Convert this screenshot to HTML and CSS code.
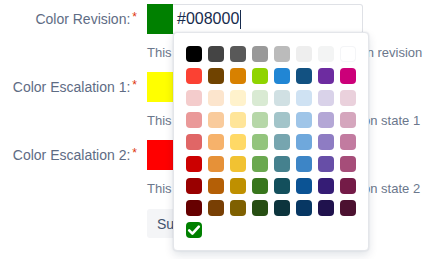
FILE: index.html
```html
<!DOCTYPE html>
<html>
<head>
<meta charset="utf-8">
<link rel="stylesheet" href="styles.css">
</head>
<body>
<form class="form">
  <div class="label">Color Revision:<span class="req">*</span></div>
  <div class="group">
    <div class="field">
      <div class="swatch-big green"></div>
      <div class="text-input">#008000<span class="caret"></span></div>
      <div class="picker">
        <span class="sw" style="background:#000000"></span>
        <span class="sw" style="background:#444444"></span>
        <span class="sw" style="background:#595959"></span>
        <span class="sw" style="background:#999999"></span>
        <span class="sw" style="background:#bbbbbb"></span>
        <span class="sw" style="background:#eeeeee"></span>
        <span class="sw" style="background:#f3f4f4"></span>
        <span class="sw light" style="background:#ffffff"></span>

        <span class="sw" style="background:#fb4133"></span>
        <span class="sw" style="background:#704300"></span>
        <span class="sw" style="background:#d88100"></span>
        <span class="sw" style="background:#8fd400"></span>
        <span class="sw" style="background:#2186d4"></span>
        <span class="sw" style="background:#125181"></span>
        <span class="sw" style="background:#6d2ca0"></span>
        <span class="sw" style="background:#cc0079"></span>

        <span class="sw" style="background:#f4cccc"></span>
        <span class="sw" style="background:#fce5cd"></span>
        <span class="sw" style="background:#fff2cc"></span>
        <span class="sw" style="background:#d9ead3"></span>
        <span class="sw" style="background:#d0e0e3"></span>
        <span class="sw" style="background:#cfe2f3"></span>
        <span class="sw" style="background:#d9d2e9"></span>
        <span class="sw" style="background:#ead1dc"></span>

        <span class="sw" style="background:#ea9999"></span>
        <span class="sw" style="background:#f9cb9c"></span>
        <span class="sw" style="background:#ffe599"></span>
        <span class="sw" style="background:#b6d7a8"></span>
        <span class="sw" style="background:#a2c4c9"></span>
        <span class="sw" style="background:#9fc5e8"></span>
        <span class="sw" style="background:#b4a7d6"></span>
        <span class="sw" style="background:#d5a6bd"></span>

        <span class="sw" style="background:#e06666"></span>
        <span class="sw" style="background:#f6b26b"></span>
        <span class="sw" style="background:#ffd966"></span>
        <span class="sw" style="background:#93c47d"></span>
        <span class="sw" style="background:#76a5af"></span>
        <span class="sw" style="background:#6fa8dc"></span>
        <span class="sw" style="background:#8e7cc3"></span>
        <span class="sw" style="background:#c27ba0"></span>

        <span class="sw" style="background:#cc0000"></span>
        <span class="sw" style="background:#e69138"></span>
        <span class="sw" style="background:#f1c232"></span>
        <span class="sw" style="background:#6aa84f"></span>
        <span class="sw" style="background:#45818e"></span>
        <span class="sw" style="background:#3d85c6"></span>
        <span class="sw" style="background:#674ea7"></span>
        <span class="sw" style="background:#a64d79"></span>

        <span class="sw" style="background:#990000"></span>
        <span class="sw" style="background:#b45f06"></span>
        <span class="sw" style="background:#bf9000"></span>
        <span class="sw" style="background:#38761d"></span>
        <span class="sw" style="background:#134f5c"></span>
        <span class="sw" style="background:#0b5394"></span>
        <span class="sw" style="background:#351c75"></span>
        <span class="sw" style="background:#741b47"></span>

        <span class="sw" style="background:#660000"></span>
        <span class="sw" style="background:#783f04"></span>
        <span class="sw" style="background:#7f6000"></span>
        <span class="sw" style="background:#274e13"></span>
        <span class="sw" style="background:#0c343d"></span>
        <span class="sw" style="background:#073763"></span>
        <span class="sw" style="background:#20124d"></span>
        <span class="sw" style="background:#4c1130"></span>

        <span class="sw selected" style="background:#008000">
          <svg viewBox="0 0 16 16" width="16" height="16"><path d="M3.2 8.4 L6.4 11.6 L12.8 4.6" fill="none" stroke="#fff" stroke-width="2.6" stroke-linecap="round" stroke-linejoin="round"/></svg>
        </span>
      </div>
    </div>
    <div class="desc">This color is used for all of the tickets in revision</div>
  </div>

  <div class="label">Color Escalation 1:<span class="req">*</span></div>
  <div class="group">
    <div class="field">
      <div class="swatch-big yellow"></div>
    </div>
    <div class="desc">This color is used for items in escalation state 1</div>
  </div>

  <div class="label">Color Escalation 2:<span class="req">*</span></div>
  <div class="group">
    <div class="field">
      <div class="swatch-big red"></div>
    </div>
    <div class="desc">This color is used for items in escalation state 2</div>
  </div>

  <div></div>
  <div class="actions"><button type="button" class="btn">Submit</button></div>
</form>
</body>
</html>
```

FILE: styles.css
```css
html, body {
  margin: 0;
  padding: 0;
  background: #ffffff;
}
body {
  font-family: "Liberation Sans", Arial, sans-serif;
  min-height: 259px;
}
.form {
  display: grid;
  grid-template-columns: 137px 1fr;
  column-gap: 10px;
  align-items: start;
  padding-top: 4px;
  padding-bottom: 24px;
}
.label {
  height: 30px;
  display: flex;
  align-items: center;
  justify-content: flex-end;
  font-size: 14px;
  color: #5e6c84;
  white-space: nowrap;
}
.req {
  color: #de350b;
  font-size: 12px;
  align-self: flex-start;
  margin-top: 6px;
  margin-left: 2px;
}
.group {
  margin-bottom: 11px;
  min-width: 0;
}
.field {
  position: relative;
  display: flex;
  height: 30px;
}
.swatch-big {
  width: 26px;
  height: 30px;
}
.green { background: #008000; }
.yellow { background: #ffff00; }
.red { background: #ff0000; }
.text-input {
  width: 190px;
  height: 30px;
  box-sizing: border-box;
  border: 1px solid #dfe1e6;
  border-left: none;
  border-radius: 0 3px 3px 0;
  padding-left: 4px;
  display: flex;
  align-items: center;
  font-size: 16px;
  color: #172b4d;
}
.caret {
  width: 1px;
  height: 19px;
  background: #172b4d;
  margin-left: 1px;
}
.picker {
  position: absolute;
  left: 26px;
  top: 28px;
  z-index: 2;
  box-sizing: border-box;
  width: 196px;
  padding: 13px 12px 12px 12px;
  background: #ffffff;
  border: 1px solid #e4e6ea;
  border-radius: 4px;
  box-shadow: 0 4px 10px rgba(9, 30, 66, 0.12), 0 0 2px rgba(9, 30, 66, 0.12);
  display: grid;
  grid-template-columns: repeat(8, 16px);
  gap: 6px;
}
.sw {
  display: block;
  width: 16px;
  height: 16px;
  border-radius: 4px;
}
.sw.light {
  box-shadow: inset 0 0 0 1px #f4f5f7;
}
.sw svg {
  display: block;
}
.desc {
  margin-top: 11px;
  font-size: 13px;
  line-height: 16px;
  color: #6b778c;
  white-space: nowrap;
}
.actions {
  padding-top: 1px;
}
.btn {
  height: 29px;
  padding: 0 10px;
  border: none;
  border-radius: 3px;
  background: #f4f5f7;
  color: #42526e;
  font-family: "Liberation Sans", Arial, sans-serif;
  font-size: 14px;
}
```
